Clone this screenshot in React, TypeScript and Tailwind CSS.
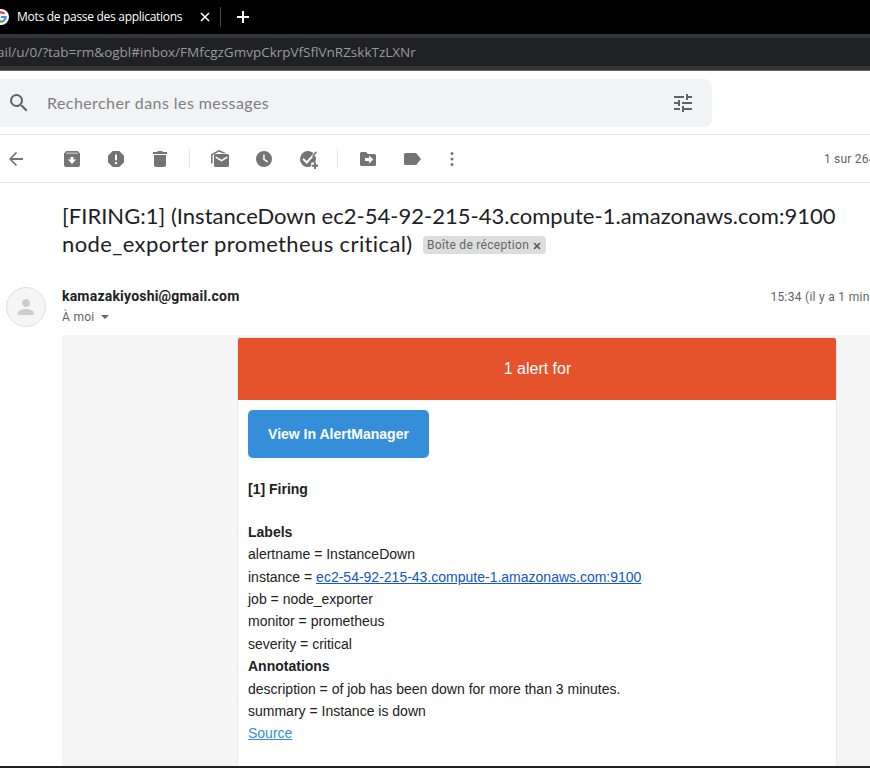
import React from "react";
import { MdSearch, MdTune, MdPerson } from "react-icons/md";

const roboto = "font-['Roboto','Liberation_Sans',sans-serif]";
const google = "font-['Lato','Open_Sans',sans-serif]";
const segoe = "font-['Open_Sans','Noto_Sans',sans-serif]";

function Icon({ children, className = "" }: { children: React.ReactNode; className?: string }) {
  return (
    <svg viewBox="0 0 20 20" width="20" height="20" fill="currentColor" className={`shrink-0 ${className}`}>
      {children}
    </svg>
  );
}

function GoogleMark() {
  return (
    <svg viewBox="0 0 16 16" width="16" height="16" className="-ml-[7px] shrink-0">
      <circle cx="8" cy="8" r="8" fill="#fff" />
      <g fill="none" strokeWidth="2.2">
        <path d="M11.4 4.8A4.6 4.6 0 0 0 4 5.7" stroke="#ea4335" />
        <path d="M4 5.7a4.6 4.6 0 0 0 0 4.6" stroke="#fbbc05" />
        <path d="M4 10.3a4.6 4.6 0 0 0 7 1.2" stroke="#34a853" />
        <path d="M11 11.5A4.6 4.6 0 0 0 12.6 8H8" stroke="#4285f4" />
      </g>
    </svg>
  );
}

function TabStrip() {
  return (
    <div className="flex h-[34px] items-center bg-black text-white">
      <GoogleMark />
      <span className={`${segoe} ml-2 w-[166px] whitespace-nowrap text-[12px] tracking-[-0.29px]`}>Mots de passe des applications</span>
      <svg viewBox="0 0 10 10" width="10" height="10" className="ml-[17px]" stroke="#fff" strokeWidth="1.6">
        <path d="M1 1l8 8M9 1l-8 8" />
      </svg>
      <div className="ml-[10px] h-5 w-px bg-[#4a4a4a]" />
      <svg viewBox="0 0 12 12" width="12" height="12" className="ml-4" stroke="#fff" strokeWidth="2">
        <path d="M6 0v12M0 6h12" />
      </svg>
    </div>
  );
}

function AddressBar() {
  return (
    <div className="h-[37px] border-b border-[#626262] bg-[#353535] py-1">
      <div className="flex h-7 items-center bg-[#202124]">
        <span className={`${segoe} -ml-[3px] whitespace-nowrap text-[13.5px] text-[#9a9a9a]`}>
          ail/u/0/?tab=rm&amp;ogbl#inbox/FMfcgzGmvpCkrpVfSflVnRZskkTzLXNr
        </span>
      </div>
    </div>
  );
}

function SearchRow() {
  return (
    <div className="h-16 border-b border-[#e8eaed] pt-2">
      <div className="flex h-12 w-[712px] items-center rounded-r-lg bg-[#f1f3f4] pl-[7px] pr-[17px] text-[#5f6368]">
        <MdSearch size={24} />
        <span className={`${google} ml-4 grow text-[16px] tracking-[0.43px] text-[#7d8082]`}>Rechercher dans les messages</span>
        <MdTune size={24} />
      </div>
    </div>
  );
}

function Toolbar() {
  return (
    <div className="flex h-12 items-center overflow-hidden border-b border-[#e8eaed] pl-1.5 text-[#747474]">
      <Icon>
        <path d="M17 9H6.1l5-5L9.8 2.9 3 10l6.8 7.1 1.3-1.1-5-5H17z" />
      </Icon>
      <Icon className="ml-9">
        <path
          fillRule="evenodd"
          d="M4.2 2h11.6L18 4.4V16a2 2 0 0 1-2 2H4a2 2 0 0 1-2-2V4.4zM4.4 3.7l-.5.8h12.2l-.5-.8zM8.6 8v2.6H5.8L10 15l4.2-4.4h-2.8V8z"
        />
      </Icon>
      <Icon className="ml-6">
        <path fillRule="evenodd" d="M6.7 2h6.6L18 6.7v6.6L13.3 18H6.7L2 13.3V6.7zM9 5.5v5.8h2V5.5zM9 13v2.1h2V13z" />
      </Icon>
      <Icon className="ml-6">
        <path d="M3 3h4l1-1h4l1 1h4v2H3zM4 6h12v10a2 2 0 0 1-2 2H6a2 2 0 0 1-2-2z" />
      </Icon>
      <div className="ml-[19px] h-5 w-px bg-[#e3e5e8]" />
      <Icon className="ml-5">
        <path
          fillRule="evenodd"
          d="M5.8 5H17.5A1.5 1.5 0 0 1 19 6.5v10a1.5 1.5 0 0 1-1.5 1.5h-12A1.5 1.5 0 0 1 4 16.5v-10A1.5 1.5 0 0 1 5.8 5zM5.7 7.2v1.8l5.8 3.6 5.8-3.6V7.2l-5.8 3.6z"
        />
        <path d="M1 14.5V5.2L9 1l7.5 3.3h-4L9 2.7 2.6 6.1v8.4z" />
      </Icon>
      <Icon className="ml-6">
        <path fillRule="evenodd" d="M10 2a8 8 0 1 1 0 16 8 8 0 0 1 0-16zM9.2 5.6v5.2l4.2 2.7.8-1.3-3.5-2.1V5.6z" />
      </Icon>
      <Icon className="ml-6 overflow-visible">
        <path d="M14.8 3.6A8 8 0 1 0 13.2 17.3V13.5H17A8 8 0 0 0 17.8 8z" />
        <path d="M5 9.8l3.8 3.7 8.4-9.6" fill="none" stroke="#fff" strokeWidth="1.9" />
        <path d="M16.7 3.6l1.1-1.3 1.2 1.1-4.3 4.9-.6-1.1zM16 13.5h2v2.2h2.2v2H18V20h-2v-2.3h-2.2v-2H16z" />
      </Icon>
      <div className="ml-[19px] h-5 w-px bg-[#e3e5e8]" />
      <Icon className="ml-5">
        <path
          fillRule="evenodd"
          d="M3.5 3H8l2 2h6.5A1.5 1.5 0 0 1 18 6.5v9a1.5 1.5 0 0 1-1.5 1.5h-13A1.5 1.5 0 0 1 2 15.5v-11A1.5 1.5 0 0 1 3.5 3zM7 9v3h4v2.5L15.4 10.5 11 6.6V9z"
        />
      </Icon>
      <Icon className="ml-6">
        <path d="M3.5 4h9.7c.6 0 1 .2 1.4.6L19 10l-4.4 5.4c-.4.4-.8.6-1.4.6H3.5A1.5 1.5 0 0 1 2 14.5v-9A1.5 1.5 0 0 1 3.5 4z" />
      </Icon>
      <Icon className="ml-5">
        <circle cx="10" cy="4.5" r="1.5" />
        <circle cx="10" cy="10" r="1.5" />
        <circle cx="10" cy="15.5" r="1.5" />
      </Icon>
      <span className={`${roboto} ml-auto mr-[-13px] w-[59px] whitespace-nowrap text-[12px] tracking-[0.2px] text-[#5f6368]`}>1 sur 264</span>
    </div>
  );
}

function Subject() {
  return (
    <div className={`${google} ml-[62px] mt-[19px] text-[22px] leading-7 text-[#202124]`}>
      <div className="whitespace-nowrap tracking-[0.015px]">[FIRING:1] (InstanceDown ec2-54-92-215-43.compute-1.amazonaws.com:9100</div>
      <div className="flex items-center whitespace-nowrap">
        <span className="w-[361px] tracking-[0.39px]">node_exporter prometheus critical)</span>
        <span className={`${roboto} mt-0.5 flex h-[18px] w-[123px] items-center rounded bg-[#ddd] pl-1 text-[12px] leading-none tracking-[0.3px] text-[#666]`}>
          Boîte de réception
          <svg viewBox="0 0 8 8" width="8" height="8" className="ml-1 mt-0.5" stroke="#555" strokeWidth="1.6">
            <path d="M1 1l6 6M7 1L1 7" />
          </svg>
        </span>
      </div>
    </div>
  );
}

function Sender() {
  return (
    <div className={`${roboto} mt-[29px] flex h-12 text-[#202124]`}>
      <div className="ml-1.5 flex size-10 items-center justify-center rounded-full border border-[#e0e0e0] bg-[#f5f5f5] text-[#ccc]">
        <MdPerson size={24} />
      </div>
      <div className="ml-4">
        <div className="-mt-px mb-px text-[14px] font-bold leading-5 tracking-[0.2px]">kamazakiyoshi@gmail.com</div>
        <div className="flex h-5 items-center text-[12px] tracking-[0.3px] text-[#5f6368]">
          À moi
          <svg viewBox="0 0 8 4" width="8" height="4" className="ml-1.5" fill="#666">
            <path d="M0 0h8L4 4z" />
          </svg>
        </div>
      </div>
      <span className="ml-auto w-[99.5px] whitespace-nowrap text-[12px] leading-5 tracking-[0.28px] text-[#5f6368]">15:34 (il y a 1 min</span>
    </div>
  );
}

const labels = [
  ["job", "node_exporter"],
  ["monitor", "prometheus"],
  ["severity", "critical"],
];

function Message() {
  return (
    <div className="ml-[62px] h-[431px] bg-[#f5f5f5] pl-[175px] pt-0.5 font-['Liberation_Sans',Arial,sans-serif]">
      <div className="h-[429px] w-[600px] overflow-hidden rounded-t-[3px] border border-b-0 border-[#e9e9e9] bg-white text-[14px] text-[#212121]">
        <div className="flex h-[62px] items-center justify-center bg-[#e6522c] pl-px text-[16px] text-white">1 alert for</div>
        <div className="p-2.5">
          <div className="flex h-12 w-[181px] items-center justify-center rounded-[5px] bg-[#348eda] font-bold text-white">
            View In AlertManager
          </div>
          <div className="mt-5 font-bold leading-[22.4px]">[1] Firing</div>
          <div className="mt-[20.35px] leading-[22.4px]">
            <div className="font-bold">Labels</div>
            <div>alertname = InstanceDown</div>
            <div>
              instance = <span className="text-[#1155cc] underline">ec2-54-92-215-43.compute-1.amazonaws.com:9100</span>
            </div>
            {labels.map(([name, value]) => (
              <div key={name}>
                {name} = {value}
              </div>
            ))}
            <div className="font-bold">Annotations</div>
            <div>description = of job has been down for more than 3 minutes.</div>
            <div>summary = Instance is down</div>
            <div className="text-[#348eda] underline">Source</div>
          </div>
        </div>
      </div>
    </div>
  );
}

export default function App() {
  return (
    <div className="h-[768px] w-[870px] overflow-hidden bg-white">
      <TabStrip />
      <AddressBar />
      <SearchRow />
      <Toolbar />
      <Subject />
      <Sender />
      <Message />
      <div className="h-0.5 bg-[#202124]" />
    </div>
  );
}
